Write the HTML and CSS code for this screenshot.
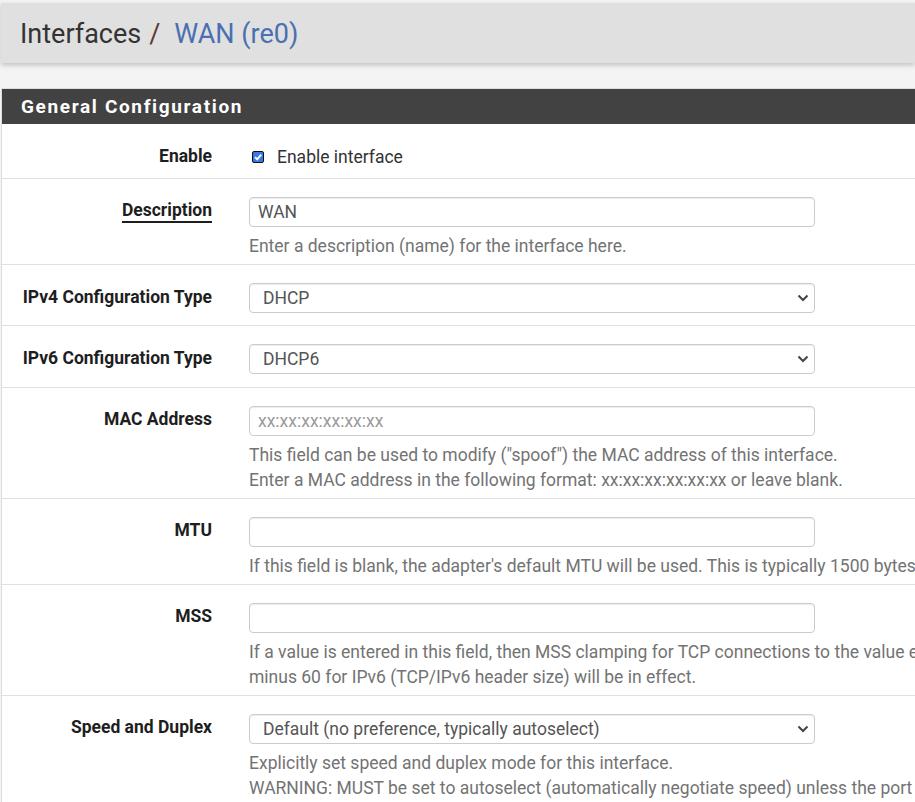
FILE: index.html
```html
<!DOCTYPE html>
<html lang="en">
<head>
<meta charset="utf-8">
<title>Interfaces / WAN (re0)</title>
<link rel="stylesheet" href="styles.css">
</head>
<body>
<div class="page">
  <header class="titlebar">
    <h1 class="crumbs"><span class="crumb">Interfaces</span><span class="sep">/</span><span class="crumb-link">WAN (re0)</span></h1>
  </header>

  <section class="panel">
    <h2 class="panel-heading">General Configuration</h2>
    <div class="panel-body">
      <div class="row row-check">
        <div class="label">Enable</div>
        <div class="field">
          <label class="check">
            <span class="box"><svg viewBox="0 0 10 10" width="10" height="10"><path d="M2 5.2 L4.2 7.4 L8.2 2.6" fill="none" stroke="#fff" stroke-width="1.8"/></svg></span>
            Enable interface
          </label>
        </div>
      </div>

      <div class="row">
        <div class="label"><span class="req">Description</span></div>
        <div class="field">
          <input class="control" type="text" value="WAN">
          <div class="help">Enter a description (name) for the interface here.</div>
        </div>
      </div>

      <div class="row row-plain">
        <div class="label">IPv4 Configuration Type</div>
        <div class="field">
          <div class="select-wrap">
            <select class="control select"><option>DHCP</option></select>
            <svg class="chev" viewBox="0 0 12 8" width="12" height="8"><path d="M1.5 1.5 L6 6 L10.5 1.5" fill="none" stroke="#444" stroke-width="2"/></svg>
          </div>
        </div>
      </div>

      <div class="row row-plain row-plain-b">
        <div class="label">IPv6 Configuration Type</div>
        <div class="field">
          <div class="select-wrap">
            <select class="control select"><option>DHCP6</option></select>
            <svg class="chev" viewBox="0 0 12 8" width="12" height="8"><path d="M1.5 1.5 L6 6 L10.5 1.5" fill="none" stroke="#444" stroke-width="2"/></svg>
          </div>
        </div>
      </div>

      <div class="row">
        <div class="label">MAC Address</div>
        <div class="field">
          <input class="control" type="text" placeholder="xx:xx:xx:xx:xx:xx">
          <div class="help">This field can be used to modify ("spoof") the MAC address of this interface.<br>Enter a MAC address in the following format: xx:xx:xx:xx:xx:xx or leave blank.</div>
        </div>
      </div>

      <div class="row">
        <div class="label">MTU</div>
        <div class="field">
          <input class="control" type="text">
          <div class="help">If this field is blank, the adapter's default MTU will be used. This is typically 1500 bytes but can vary in some circumstances.</div>
        </div>
      </div>

      <div class="row">
        <div class="label">MSS</div>
        <div class="field">
          <input class="control" type="text">
          <div class="help">If a value is entered in this field, then MSS clamping for TCP connections to the value entered above minus 40 for IPv4 (TCP/IPv4 header size) and<br>minus 60 for IPv6 (TCP/IPv6 header size) will be in effect.</div>
        </div>
      </div>

      <div class="row">
        <div class="label">Speed and Duplex</div>
        <div class="field">
          <div class="select-wrap">
            <select class="control select"><option>Default (no preference, typically autoselect)</option></select>
            <svg class="chev" viewBox="0 0 12 8" width="12" height="8"><path d="M1.5 1.5 L6 6 L10.5 1.5" fill="none" stroke="#444" stroke-width="2"/></svg>
          </div>
          <div class="help">Explicitly set speed and duplex mode for this interface.<br>WARNING: MUST be set to autoselect (automatically negotiate speed) unless the port this interface connects to has its speed and duplex forced.</div>
        </div>
      </div>
    </div>
  </section>
</div>
</body>
</html>
```
FILE: styles.css
```css
html, body {
  margin: 0;
  padding: 0;
}
body {
  background: #f4f4f4;
  font-family: Roboto, "Liberation Sans", sans-serif;
  color: #212121;
  overflow: hidden;
}
.page {
  width: 915px;
  overflow: hidden;
  padding-top: 3px;
}
.titlebar {
  background: #e0e0e0;
  height: 60px;
  margin-left: 1px;
  box-shadow: 0 2px 5px rgba(0, 0, 0, 0.22);
  display: flex;
  align-items: center;
  padding-left: 19px;
}
.crumbs {
  margin: 2px 0 0;
  font-weight: 400;
  font-size: 27px;
  line-height: 1;
  white-space: nowrap;
}
.crumb {
  color: #333;
}
.sep {
  color: #5a3a30;
  margin: 0 14px 0 8px;
}
.crumb-link {
  color: #4a70b3;
}
.panel {
  margin-top: 25px;
  margin-left: 1px;
  width: 1300px;
  border-top: 1px solid #ddd;
  border-left: 1px solid #ddd;
  background: #fff;
}
.panel-heading {
  margin: 0;
  background: #424242;
  color: #fff;
  height: 35px;
  line-height: 35px;
  font-size: 19px;
  font-weight: 700;
  letter-spacing: 1.65px;
  padding-left: 19px;
}
.row {
  display: flex;
  padding: 18px 0 5px;
  border-bottom: 1px solid #e0e0e0;
}
.row-plain {
  padding-bottom: 12px;
}
.row-plain-b {
  padding-bottom: 13px;
}
.row-check {
  padding-top: 19px;
  padding-bottom: 7px;
}
.label {
  width: 210px;
  flex: none;
  text-align: right;
  font-weight: 700;
  font-size: 17.5px;
  line-height: 25px;
  padding-top: 1px;
  color: #1e1e1e;
  white-space: nowrap;
}
.row-plain .label {
  padding-top: 2px;
}
.req {
  text-decoration: underline;
  text-underline-offset: 5px;
  text-decoration-thickness: 1.5px;
}
.field {
  margin-left: 37px;
  flex: 1;
}
.check {
  display: flex;
  align-items: center;
  height: 28px;
  font-size: 17.5px;
  color: #333;
}
.box {
  box-sizing: border-box;
  width: 12px;
  height: 12px;
  margin: 0 13px 0 3px;
  border: 1.5px solid #111;
  border-radius: 2px;
  background: #3b78e7;
  display: flex;
  align-items: center;
  justify-content: center;
}
.box svg {
  display: block;
}
.control {
  display: block;
  box-sizing: border-box;
  width: 566px;
  height: 30px;
  border: 1px solid #ccc;
  border-radius: 4px;
  padding: 0 8px;
  font-family: Roboto, "Liberation Sans", sans-serif;
  font-size: 17.5px;
  color: #555;
  background: #fff;
  box-shadow: inset 0 1px 1px rgba(0, 0, 0, 0.075);
  outline: none;
}
.control::placeholder {
  color: #9a9a9a;
}
.select-wrap {
  position: relative;
  width: 566px;
}
.select {
  appearance: none;
  -webkit-appearance: none;
  padding-left: 13px;
}
.chev {
  position: absolute;
  right: 6px;
  top: 11px;
  pointer-events: none;
}
.help {
  margin-top: 7px;
  font-size: 17.5px;
  line-height: 25px;
  color: #737373;
  white-space: nowrap;
}
```
